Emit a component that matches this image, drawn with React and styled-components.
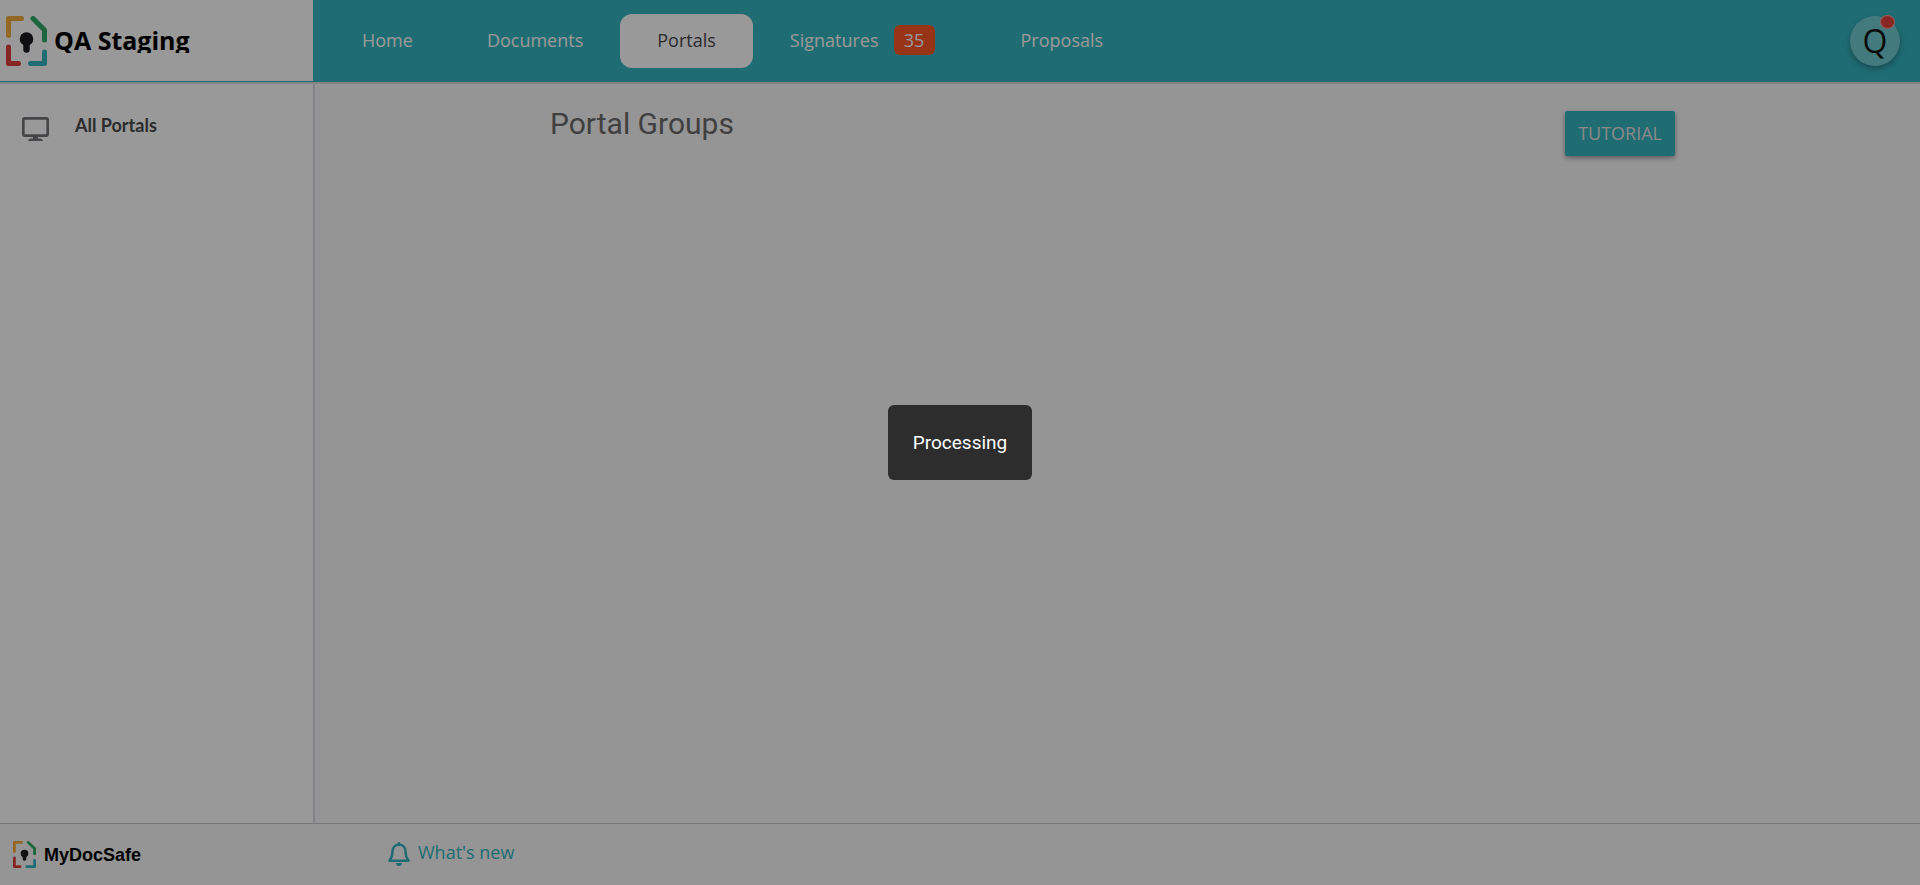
import React from "react";
import styled, { createGlobalStyle, ThemeProvider } from "styled-components";

const theme = {
  teal: "#34b6c0",
  surface: "#ffffff",
  canvas: "#f9f9f9",
  line: "#dcdcdf",
  divider: "#dadae4",
  text: "#4a4a4e",
  icon: "#76767a",
  badge: "#fc5725",
  alert: "#e5413c",
  body: '"Open Sans", sans-serif',
  heading: "Roboto, sans-serif",
  menu: "Lato, sans-serif",
  logo: '"Liberation Sans", Arial, sans-serif',
};

const GlobalStyle = createGlobalStyle`
  *, *::before, *::after { box-sizing: border-box; }
  body {
    margin: 0;
    font-family: ${theme.body};
    font-size: 18px;
    background: ${theme.canvas};
  }
`;

const Page = styled.div`
  display: flex;
  flex-direction: column;
  min-height: 100vh;
`;

const Header = styled.header`
  display: flex;
  height: 84px;
  border-bottom: 2px solid ${({ theme }) => theme.line};
  background: ${({ theme }) => theme.teal};
`;

const Brand = styled.a`
  display: flex;
  align-items: center;
  gap: 7px;
  flex: 0 0 313px;
  padding-left: 6px;
  border-bottom: 1px solid ${({ theme }) => theme.teal};
  background: ${({ theme }) => theme.surface};
  color: #000;
  text-decoration: none;
`;

const BrandName = styled.span`
  height: 24px;
  overflow: hidden;
  font-size: 25px;
  font-weight: 700;
  line-height: 22px;
`;

const Nav = styled.nav`
  display: flex;
  flex: 1;
  align-items: center;
  padding-left: 12px;
`;

const NavLink = styled.a`
  display: flex;
  align-items: center;
  height: 54px;
  padding: 0 37px 2px;
  margin-right: ${({ $spaced }) => ($spaced ? "12px" : "0")};
  border-radius: 12px;
  background: ${({ $active, theme }) => ($active ? theme.surface : "transparent")};
  color: ${({ $active, theme }) => ($active ? theme.text : "#fff")};
  text-decoration: none;
`;

const Badge = styled.span`
  display: inline-flex;
  align-items: center;
  justify-content: center;
  width: 41px;
  height: 30px;
  margin-left: 15px;
  border-radius: 6px;
  background: ${({ theme }) => theme.badge};
  color: #fff;
`;

const Avatar = styled.button`
  position: relative;
  width: 50px;
  height: 50px;
  margin: 0 20px 0 auto;
  align-self: center;
  padding: 0;
  border: 0;
  border-radius: 50%;
  background: #71cbd2;
  box-shadow: 0 3px 6px rgba(0, 0, 0, 0.3);
  color: #111;
  font-family: inherit;
  font-size: 32px;
  line-height: 50px;
`;

const AvatarDot = styled.span`
  position: absolute;
  top: -1px;
  right: 5px;
  width: 15px;
  height: 14px;
  border: 1px solid #fb9a98;
  border-radius: 50%;
  background: ${({ theme }) => theme.alert};
`;

const Body = styled.div`
  display: flex;
  flex: 1;
`;

const Sidebar = styled.aside`
  flex: 0 0 315px;
  padding-top: 20px;
  border-right: 2px solid ${({ theme }) => theme.divider};
  background: ${({ theme }) => theme.surface};
`;

const SideLink = styled.a`
  display: flex;
  align-items: center;
  gap: 26px;
  height: 42px;
  padding-left: 22px;
  color: ${({ theme }) => theme.text};
  font-family: ${({ theme }) => theme.menu};
  font-weight: 700;
  line-height: 24px;
  text-decoration: none;

  svg {
    margin-top: 8px;
  }
`;

const Main = styled.main`
  flex: 1;
  padding: 20px 245px 0 235px;
`;

const TitleRow = styled.div`
  display: flex;
  align-items: flex-start;
  justify-content: space-between;
`;

const Title = styled.h1`
  margin: 0;
  color: #6b6b6b;
  font-family: ${({ theme }) => theme.heading};
  font-size: 30px;
  font-weight: 400;
  line-height: 40px;
`;

const TutorialButton = styled.button`
  height: 45px;
  margin-top: 7px;
  padding: 0 13px 2px;
  border: 0;
  border-radius: 2px;
  background: ${({ theme }) => theme.teal};
  box-shadow: 0 2px 5px rgba(0, 0, 0, 0.4);
  color: #e4e4e4;
  font-family: inherit;
  font-size: 18px;
  text-transform: uppercase;
`;

const Footer = styled.footer`
  display: flex;
  align-items: center;
  height: 62px;
  border-top: 1px solid #c8c8ca;
  background: ${({ theme }) => theme.canvas};
`;

const FooterBrand = styled.a`
  display: flex;
  align-items: center;
  gap: 8px;
  flex: 0 0 388px;
  padding-left: 13px;
  color: #000;
  font-family: ${({ theme }) => theme.logo};
  font-weight: 700;
  line-height: 22px;
  text-decoration: none;
`;

const NewsLink = styled.a`
  display: flex;
  align-items: center;
  gap: 8px;
  padding-bottom: 6px;
  color: ${({ theme }) => theme.teal};
  text-decoration: none;

  svg {
    margin-top: 5px;
  }
`;

const Overlay = styled.div`
  position: fixed;
  inset: 0;
  display: flex;
  align-items: center;
  justify-content: center;
  background: rgba(0, 0, 0, 0.4);
`;

const Toast = styled.div`
  padding: 25px;
  border-radius: 6px;
  background: #2d2d2d;
  color: #fff;
  font-family: ${({ theme }) => theme.heading};
  font-size: 19px;
  font-weight: 400;
  line-height: 25px;
`;

const LogoMark = ({ width, height }) => (
  <svg width={width} height={height} viewBox="0 0 41 50" fill="none" strokeWidth="5" strokeLinecap="round" strokeLinejoin="round" preserveAspectRatio="none" aria-hidden="true">
    <path d="M2.5 19.5V2.5H15.500" stroke="#f6ad3f" />
    <path d="M27 2.500L38.500 14V24" stroke="#2fa968" />
    <path d="M2.500 31V47.500H12.500" stroke="#df403c" />
    <path d="M38.500 36V47.500H24.500" stroke="#34b6c0" />
    <circle cx="20.500" cy="23" r="6.800" fill="#1b1a1f" />
    <path d="M20.500 26V33.500" stroke="#1b1a1f" strokeWidth="6.400" />
  </svg>
);

const MonitorIcon = () => (
  <svg width="27" height="24" viewBox="0 0 27 24" fill="none" aria-hidden="true">
    <rect x="1.300" y="1.300" width="24.400" height="17.400" rx="1.500" stroke={theme.icon} strokeWidth="2.700" />
    <path d="M11 19H16V21.500H18.500Q20.500 21.500 21 24H6Q6.500 21.500 8.500 21.500H11Z" fill={theme.icon} />
  </svg>
);

const BellIcon = () => (
  <svg width="22" height="24" viewBox="0 0 22 24" fill="none" aria-hidden="true">
    <path d="M11 2.500C6.500 2.500 4.500 6 4.500 9.500C4.500 14 3.500 16 1.500 18.700H20.500C18.500 16 17.500 14 17.500 9.500C17.500 6 15.500 2.500 11 2.500Z" stroke={theme.teal} strokeWidth="2.400" strokeLinejoin="round" />
    <path d="M11 1.300V3" stroke={theme.teal} strokeWidth="2.600" strokeLinecap="round" />
    <path d="M8 21H14A3 3 0 0 1 8 21Z" fill={theme.teal} />
  </svg>
);

const links = [
  { label: "Home" },
  { label: "Documents" },
  { label: "Portals", active: true },
  { label: "Signatures", count: 35 },
  { label: "Proposals" },
];

export default function App() {
  return (
    <ThemeProvider theme={theme}>
      <GlobalStyle />
      <Page>
        <Header>
          <Brand href="#">
            <LogoMark width={41} height={50} />
            <BrandName>QA Staging</BrandName>
          </Brand>
          <Nav>
            {links.map(({ label, active, count }) => (
              <NavLink key={label} href="#" $active={active} $spaced={Boolean(count)} aria-current={active ? "page" : undefined}>
                {label}
                {count && <Badge>{count}</Badge>}
              </NavLink>
            ))}
            <Avatar type="button">
              Q
              <AvatarDot />
            </Avatar>
          </Nav>
        </Header>
        <Body>
          <Sidebar>
            <SideLink href="#">
              <MonitorIcon />
              All Portals
            </SideLink>
          </Sidebar>
          <Main>
            <TitleRow>
              <Title>Portal Groups</Title>
              <TutorialButton type="button">Tutorial</TutorialButton>
            </TitleRow>
          </Main>
        </Body>
        <Footer>
          <FooterBrand href="#">
            <LogoMark width={23} height={27} />
            MyDocSafe
          </FooterBrand>
          <NewsLink href="#">
            <BellIcon />
            What's new
          </NewsLink>
        </Footer>
      </Page>
      <Overlay>
        <Toast role="status">Processing</Toast>
      </Overlay>
    </ThemeProvider>
  );
}
